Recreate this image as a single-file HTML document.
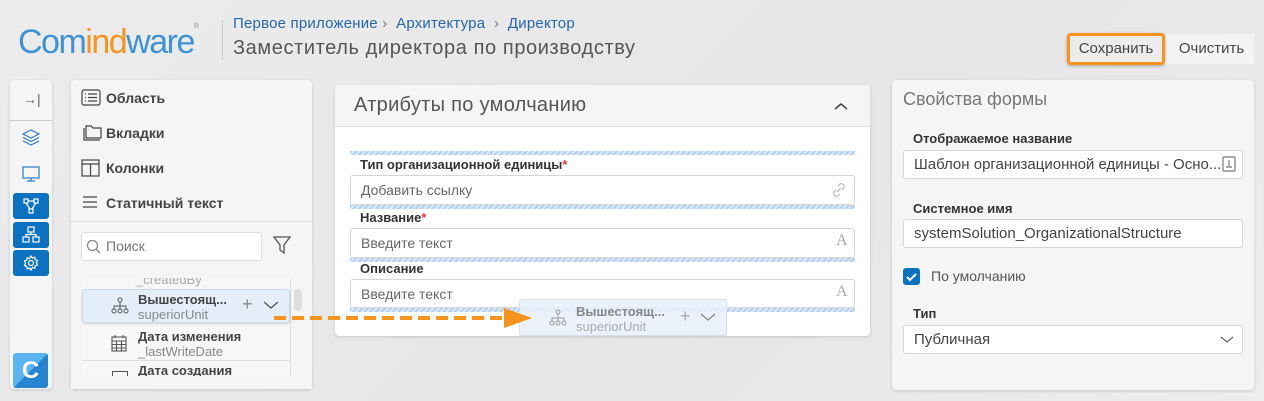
<!DOCTYPE html>
<html><head><meta charset="utf-8"><style>
*{box-sizing:border-box;margin:0;padding:0}
body{width:1264px;height:401px;overflow:hidden;background:linear-gradient(135deg,#ececec,#e6e6e6 60%,#ededed);font-family:"Liberation Sans","Noto Sans CJK SC",sans-serif;position:relative;color:#333}
.a{position:absolute}
.card{position:absolute;background:#fff;border-radius:4px;box-shadow:0 1px 3px rgba(0,0,0,.15)}
.lbl{position:absolute;font-weight:bold;font-size:13px;color:#333}
.inp{position:absolute;background:#fff;border:1px solid #d6d6d6;border-radius:3px;font-size:14px;color:#666;padding-left:10px;display:flex;align-items:center}
.hatch{position:absolute;height:4px;background:repeating-linear-gradient(135deg,#b5d0ea 0 2px,#dbe8f5 2px 4px)}
.bb{position:absolute;left:13px;width:36px;height:26px;background:#0a72c0;border-radius:3px}
.it{position:absolute;font-size:14px;font-weight:bold;color:#444}
</style></head><body>
<div class="a" style="left:18px;top:23px;font-size:34px;letter-spacing:-1.5px;color:#3d92d8">Com<span style="color:#f7941d">ind</span>ware<sup style="font-size:7px;color:#888;vertical-align:top">®</sup></div>
<div class="a" style="left:222px;top:20px;width:1px;height:40px;background:#ccc"></div>
<div class="a" style="left:233px;top:15px;font-size:15px;color:#2566ad;letter-spacing:.2px">Первое приложение <span style="color:#777">›</span>&nbsp; Архитектура &nbsp;<span style="color:#777">›</span>&nbsp; Директор</div>
<div class="a" style="left:233px;top:37px;font-size:20px;color:#555;letter-spacing:.6px">Заместитель директора по производству</div>
<div class="a" style="left:1163px;top:34px;width:91px;height:30px;background:#f4f4f4;font-size:15px;color:#444;text-align:center;line-height:30px;padding-left:6px">Очистить</div>
<div class="a" style="left:1067px;top:33px;width:98px;height:32px;border:3px solid #f7941d;border-radius:4px;background:#ececec;font-size:15px;color:#444;text-align:center;line-height:26px;box-shadow:0 1px 3px rgba(0,0,0,.3)">Сохранить</div>

<!-- sidebar -->
<div class="card" style="left:10px;top:80px;width:42px;height:309px;background:#f5f5f5"></div>
<div class="a" style="left:23px;top:91px;font-size:14px;color:#666">→|</div>
<div class="a" style="left:10px;top:120px;width:42px;height:1px;background:#ccc"></div>
<svg class="a" style="left:21px;top:128px" width="20" height="20" viewBox="0 0 20 20" fill="none" stroke="#2a7ac4" stroke-width="1.2"><path d="M10 2L18 6 10 10 2 6Z M2 9.5L10 13.5 18 9.5 M2 13L10 17 18 13"/></svg>
<svg class="a" style="left:21px;top:165px" width="20" height="18" viewBox="0 0 20 18" fill="none" stroke="#2a7ac4" stroke-width="1.2"><rect x="2" y="2" width="16" height="11"/><path d="M10 13v3M6 16h8"/></svg>
<div class="bb" style="top:193px"></div><div class="bb" style="top:222px"></div><div class="bb" style="top:250px"></div>
<svg class="a" style="left:21px;top:197px" width="20" height="18" viewBox="0 0 20 18" fill="none" stroke="#fff" stroke-width="1.2"><rect x="3" y="2" width="4" height="4"/><rect x="13" y="2" width="4" height="4"/><rect x="8" y="12" width="4" height="4"/><path d="M7 4h6M5 6l4 6M15 6l-4 6"/></svg>
<svg class="a" style="left:21px;top:226px" width="20" height="18" viewBox="0 0 20 18" fill="none" stroke="#fff" stroke-width="1.2"><rect x="7" y="1" width="6" height="5"/><rect x="2" y="11" width="6" height="5"/><rect x="12" y="11" width="6" height="5"/><path d="M10 6v2.5M5 11V8.5h10V11"/></svg>
<svg class="a" style="left:22px;top:254px" width="18" height="18" viewBox="0 0 18 18" fill="none" stroke="#fff" stroke-width="1.2"><circle cx="9" cy="9" r="2.5"/><path d="M9 2l1.5 2 2.3-.8.4 2.4 2.3.9-1 2.2 1 2.2-2.3.9-.4 2.4-2.3-.8L9 16l-1.5-2-2.3.8-.4-2.4-2.3-.9 1-2.2-1-2.2 2.3-.9.4-2.4 2.3.8Z"/></svg>
<div class="a" style="left:13px;top:353px;width:35px;height:35px;border-radius:3px;background:linear-gradient(135deg,#5ab4f0 50%,#2585d0 50%);color:#fff;font-weight:bold;font-size:24px;text-align:center;line-height:35px">C</div>

<!-- left panel -->
<div class="card" style="left:71px;top:80px;width:241px;height:309px;background:#f5f5f5"></div>
<svg class="a" style="left:81px;top:89px" width="20" height="17" viewBox="0 0 20 17" fill="none" stroke="#444" stroke-width="1.2"><rect x="1" y="1" width="18" height="15" rx="2"/><path d="M4 5h1M7 5h9M4 8.5h1M7 8.5h9M4 12h1M7 12h9"/></svg>
<div class="it" style="left:106px;top:90px">Область</div>
<svg class="a" style="left:81px;top:124px" width="22" height="18" viewBox="0 0 22 18" fill="none" stroke="#444" stroke-width="1.2"><path d="M3 4v12h16M5 2h5l2 2h8v10H5Z"/></svg>
<div class="it" style="left:106px;top:125px">Вкладки</div>
<svg class="a" style="left:81px;top:159px" width="20" height="18" viewBox="0 0 20 18" fill="none" stroke="#444" stroke-width="1.2"><rect x="1" y="1" width="17" height="16"/><path d="M1 5h17M9.5 5v12"/></svg>
<div class="it" style="left:106px;top:160px">Колонки</div>
<svg class="a" style="left:82px;top:195px" width="16" height="14" viewBox="0 0 16 14" fill="none" stroke="#444" stroke-width="1.2"><path d="M1 2h14M1 7h14M1 12h14"/></svg>
<div class="it" style="left:106px;top:195px">Статичный текст</div>
<div class="a" style="left:71px;top:221px;width:241px;height:1px;background:#ddd"></div>
<div class="a" style="left:81px;top:232px;width:181px;height:29px;background:#fff;border:1px solid #ddd;border-radius:3px;font-size:14px;color:#777;line-height:27px;padding-left:24px">Поиск</div>
<svg class="a" style="left:86px;top:239px" width="16" height="16" viewBox="0 0 16 16" fill="none" stroke="#888" stroke-width="1.3"><circle cx="6.5" cy="6.5" r="5"/><path d="M10 10l4 4"/></svg>
<svg class="a" style="left:272px;top:235px" width="20" height="20" viewBox="0 0 20 20" fill="none" stroke="#555" stroke-width="1.3"><path d="M2 2h16l-6 8v8l-4-3v-5Z"/></svg>
<div class="a" style="left:82px;top:278px;width:209px;height:98px;background:#f7f7f7;border-right:1px solid #ddd;overflow:hidden">
<div class="a" style="left:54px;top:-6px;font-size:13px;color:#aaa">_createdBy</div>
<div class="a" style="left:0;top:82px;width:209px;height:1px;background:#ddd"></div>
</div>
<div class="a" style="left:82px;top:289px;width:208px;height:34px;background:#e3eef9;border:1px solid #c8dbee;border-radius:3px;box-shadow:0 1px 2px rgba(0,0,0,.15)"></div>
<svg class="a" style="left:110px;top:297px" width="20" height="18" viewBox="0 0 20 18" fill="none" stroke="#555" stroke-width="1"><circle cx="10" cy="3" r="2"/><path d="M10 5v4M4 12V9h12v3M10 9v3"/><circle cx="4" cy="14" r="2"/><circle cx="10" cy="14" r="2"/><circle cx="16" cy="14" r="2"/></svg>
<div class="it" style="left:138px;top:292px;font-size:13px">Вышестоящ...</div>
<div class="a" style="left:138px;top:307px;font-size:13px;color:#888">superiorUnit</div>
<div class="a" style="left:242px;top:294px;font-size:18px;color:#888">+</div>
<svg class="a" style="left:263px;top:300px" width="16" height="10" viewBox="0 0 16 10" fill="none" stroke="#555" stroke-width="1.3"><path d="M1 2l7 6 7-6"/></svg>
<div class="a" style="left:294px;top:289px;width:8px;height:22px;background:#ddd;border-radius:4px"></div>
<svg class="a" style="left:110px;top:334px" width="18" height="18" viewBox="0 0 18 18" fill="none" stroke="#555" stroke-width="1.1"><rect x="2" y="3" width="14" height="14"/><path d="M2 7h14M2 10.5h14M2 14h14M6.5 7v10M11.5 7v10M5 1v3M13 1v3"/></svg>
<div class="it" style="left:138px;top:329px;font-size:13px">Дата изменения</div>
<div class="a" style="left:138px;top:344px;font-size:13px;color:#888">_lastWriteDate</div>
<div class="it" style="left:138px;top:363px;font-size:13px">Дата создания</div>
<div class="a" style="left:112px;top:371px;width:16px;height:5px;border:1px solid #555;border-bottom:none"></div>
<div class="a" style="left:71px;top:376px;width:241px;height:13px;background:#f5f5f5"></div>

<!-- center -->
<div class="card" style="left:335px;top:85px;width:535px;height:251px"></div>
<div class="a" style="left:335px;top:85px;width:535px;height:42px;background:#f5f5f5;border-bottom:1px solid #ddd;border-radius:4px 4px 0 0"></div>
<div class="a" style="left:354px;top:94px;font-size:20px;color:#555;letter-spacing:.3px">Атрибуты по умолчанию</div>
<svg class="a" style="left:834px;top:102px" width="14" height="9" viewBox="0 0 14 9" fill="none" stroke="#444" stroke-width="1.5"><path d="M1 7l6-5 6 5"/></svg>
<div class="hatch" style="left:350px;top:151px;width:505px"></div>
<div class="lbl" style="left:360px;top:157px">Тип организационной единицы<span style="color:#e53935">*</span></div>
<div class="inp" style="left:350px;top:175px;width:505px;height:30px">Добавить ссылку</div>
<svg class="a" style="left:830px;top:181px" width="18" height="18" viewBox="0 0 18 18" fill="none" stroke="#bbb" stroke-width="1.2"><path d="M7 11l4-4M8 5l2-2a3 3 0 0 1 4 4l-2 2M10 13l-2 2a3 3 0 0 1-4-4l2-2"/></svg>
<div class="hatch" style="left:350px;top:205px;width:505px"></div>
<div class="lbl" style="left:360px;top:210px">Название<span style="color:#e53935">*</span></div>
<div class="inp" style="left:350px;top:228px;width:505px;height:30px">Введите текст</div>
<div class="a" style="left:836px;top:232px;font-family:'Liberation Serif',serif;font-size:16px;color:#aaa">A</div>
<div class="hatch" style="left:350px;top:258px;width:505px"></div>
<div class="lbl" style="left:360px;top:261px">Описание</div>
<div class="inp" style="left:350px;top:279px;width:505px;height:29px">Введите текст</div>
<div class="a" style="left:836px;top:283px;font-family:'Liberation Serif',serif;font-size:16px;color:#aaa">A</div>
<div class="hatch" style="left:350px;top:308px;width:505px"></div>

<!-- ghost -->
<div class="a" style="left:519px;top:299px;width:208px;height:37px;background:rgba(232,240,250,.85);border:1px solid #d4e0ee;border-radius:3px"></div>
<svg class="a" style="left:548px;top:309px" width="20" height="18" viewBox="0 0 20 18" fill="none" stroke="#999" stroke-width="1"><circle cx="10" cy="3" r="2"/><path d="M10 5v4M4 12V9h12v3M10 9v3"/><circle cx="4" cy="14" r="2"/><circle cx="10" cy="14" r="2"/><circle cx="16" cy="14" r="2"/></svg>
<div class="a" style="left:576px;top:304px;font-size:13px;font-weight:bold;color:#888">Вышестоящ...</div>
<div class="a" style="left:576px;top:319px;font-size:13px;color:#aaa">superiorUnit</div>
<div class="a" style="left:680px;top:306px;font-size:18px;color:#aaa">+</div>
<svg class="a" style="left:700px;top:312px" width="16" height="10" viewBox="0 0 16 10" fill="none" stroke="#888" stroke-width="1.3"><path d="M1 2l7 6 7-6"/></svg>
<svg class="a" style="left:272px;top:306px" width="265" height="24" viewBox="0 0 265 24"><path d="M2 12H236" stroke="#f7941d" stroke-width="4" stroke-dasharray="12 6"/><path d="M232 2L260 12 232 22Z" fill="#f7941d"/></svg>

<!-- right -->
<div class="card" style="left:892px;top:80px;width:362px;height:310px;background:#f5f5f5"></div>
<div class="a" style="left:903px;top:89px;font-size:18px;color:#777">Свойства формы</div>
<div class="lbl" style="left:913px;top:131px">Отображаемое название</div>
<div class="inp" style="left:903px;top:150px;width:340px;height:29px;color:#444;font-size:15px">Шаблон организационной единицы - Осно...</div>
<svg class="a" style="left:1222px;top:156px" width="14" height="16" viewBox="0 0 14 16" fill="none" stroke="#777" stroke-width="1.2"><rect x="1" y="1" width="12" height="14" rx="1"/><path d="M7 4v6M4 11h6"/></svg>
<div class="lbl" style="left:913px;top:201px">Системное имя</div>
<div class="inp" style="left:903px;top:219px;width:340px;height:29px;color:#444;font-size:15px">systemSolution_OrganizationalStructure</div>
<div class="a" style="left:903px;top:268px;width:17px;height:17px;background:#0a72c0;border-radius:3px"></div>
<svg class="a" style="left:905px;top:270px" width="13" height="13" viewBox="0 0 13 13" fill="none" stroke="#fff" stroke-width="2"><path d="M2 7l3 3 6-6"/></svg>
<div class="a" style="left:931px;top:268px;font-size:14px;color:#555">По умолчанию</div>
<div class="lbl" style="left:913px;top:306px">Тип</div>
<div class="inp" style="left:903px;top:325px;width:340px;height:29px;color:#444;font-size:15px">Публичная</div>
<svg class="a" style="left:1220px;top:335px" width="14" height="9" viewBox="0 0 14 9" fill="none" stroke="#666" stroke-width="1.2"><path d="M1 2l6 5 6-5"/></svg>
</body></html>
